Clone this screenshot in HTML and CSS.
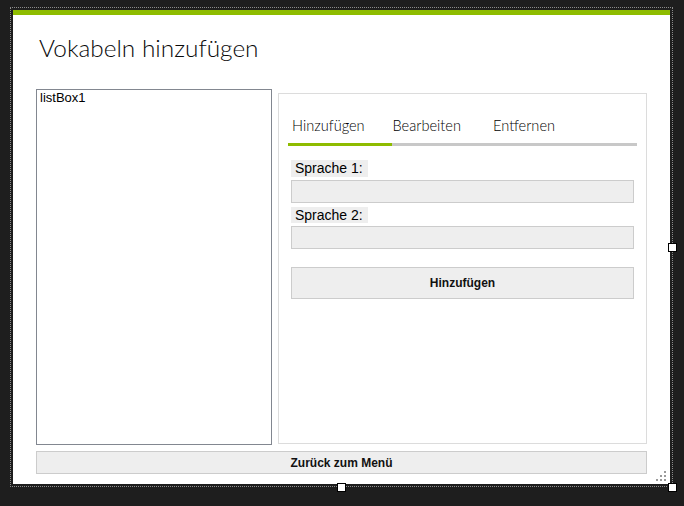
FILE: index.html
```html
<!DOCTYPE html>
<html lang="de">
<head>
<meta charset="utf-8">
<title>Vokabeln hinzufügen</title>
<link rel="stylesheet" href="styles.css">
</head>
<body>
<div class="surface">
  <div class="frame">
    <div class="form">
      <div class="accent"></div>
      <h1 class="title">Vokabeln hinzufügen</h1>
      <div class="main">
        <div class="listbox">listBox1</div>
        <div class="panel">
          <div class="tabs">
            <div class="tab">Hinzufügen</div>
            <div class="tab">Bearbeiten</div>
            <div class="tab">Entfernen</div>
          </div>
          <div class="tabline"><div class="tabline-active"></div></div>
          <div class="page">
            <div class="label">Sprache 1:</div>
            <div class="input"></div>
            <div class="label label-second">Sprache 2:</div>
            <div class="input"></div>
            <div class="button button-add">Hinzufügen</div>
          </div>
        </div>
      </div>
      <div class="button button-back">Zurück zum Menü</div>
      <svg class="grip" width="10" height="10" viewBox="0 0 10 10">
        <rect x="8" y="0" width="2" height="2" fill="#9a9a9a"/>
        <rect x="4" y="4" width="2" height="2" fill="#9a9a9a"/>
        <rect x="8" y="4" width="2" height="2" fill="#9a9a9a"/>
        <rect x="0" y="8" width="2" height="2" fill="#9a9a9a"/>
        <rect x="4" y="8" width="2" height="2" fill="#9a9a9a"/>
        <rect x="8" y="8" width="2" height="2" fill="#9a9a9a"/>
      </svg>
    </div>
    <span class="handle handle-right"></span>
    <span class="handle handle-bottom"></span>
    <span class="handle handle-corner"></span>
  </div>
</div>
</body>
</html>
```
FILE: styles.css
```css
html, body {
  margin: 0;
  padding: 0;
  background: #1e1e1e;
}

body {
  min-height: 506px;
}

.surface {
  padding: 7px 0 0 10px;
}

.frame {
  position: relative;
  width: 657px;
  height: 474px;
  padding: 2px;
  border: 1px dotted #8c8c8c;
}

.form {
  position: relative;
  width: 657px;
  height: 474px;
  background: #ffffff;
  display: flex;
  flex-direction: column;
}

.accent {
  height: 5px;
  background: #8ebc00;
}

.title {
  margin: 0;
  height: 74px;
  box-sizing: border-box;
  padding: 18px 0 0 26px;
  font-family: Lato, "Open Sans", sans-serif;
  font-weight: 300;
  font-size: 24.4px;
  line-height: 30px;
  color: #0a0a0a;
}

.main {
  display: flex;
  align-items: flex-start;
  gap: 6px;
  padding: 0 23px;
  height: 356px;
}

.listbox {
  width: 236px;
  height: 356px;
  box-sizing: border-box;
  border: 1px solid #828790;
  padding: 0 3px;
  font-family: "Liberation Sans", Arial, sans-serif;
  font-size: 13px;
  line-height: 15px;
  color: #000;
}

.panel {
  margin-top: 4px;
  width: 369px;
  height: 351px;
  box-sizing: border-box;
  border: 1px solid #dcdcdc;
  padding: 0 9px;
}

.tabs {
  display: flex;
  align-items: flex-end;
  height: 49px;
  box-sizing: border-box;
  padding-bottom: 7px;
}

.tab {
  width: 100.5px;
  padding-left: 4px;
  box-sizing: border-box;
  font-family: Lato, "Open Sans", sans-serif;
  font-weight: 300;
  font-size: 14.6px;
  line-height: 20px;
  color: #000;
}

.tabline {
  height: 3px;
  background: #c8c8c8;
}

.tabline-active {
  width: 104px;
  height: 3px;
  background: #8ebc00;
}

.page {
  padding: 14px 3px 0;
  display: flex;
  flex-direction: column;
  align-items: flex-start;
}

.label {
  width: 77px;
  height: 17px;
  box-sizing: border-box;
  padding-left: 4px;
  background: #eeeeee;
  font-family: "Liberation Sans", Arial, sans-serif;
  font-size: 14px;
  line-height: 17px;
  color: #000;
  white-space: nowrap;
  margin-bottom: 3px;
}

.label-second {
  margin-top: 4px;
  height: 16px;
}

.input {
  width: 343px;
  height: 23px;
  box-sizing: border-box;
  border: 1px solid #cccccc;
  background: #eeeeee;
}

.button {
  box-sizing: border-box;
  border: 1px solid #cccccc;
  background: #eeeeee;
  font-family: "Liberation Sans", Arial, sans-serif;
  font-weight: bold;
  font-size: 12px;
  color: #111;
  display: flex;
  align-items: center;
  justify-content: center;
}

.button-add {
  margin-top: 18px;
  width: 343px;
  height: 32px;
}

.button-back {
  margin: 6px 23px 0;
  height: 23px;
}

.grip {
  position: absolute;
  left: 643px;
  top: 461px;
}

.handle {
  position: absolute;
  z-index: 2;
  width: 9px;
  height: 9px;
  box-sizing: border-box;
  background: #ffffff;
  border: 1px solid #000000;
}

.handle-right {
  left: 657px;
  top: 235px;
}

.handle-bottom {
  left: 326px;
  top: 475px;
}

.handle-corner {
  left: 657px;
  top: 475px;
}
```
